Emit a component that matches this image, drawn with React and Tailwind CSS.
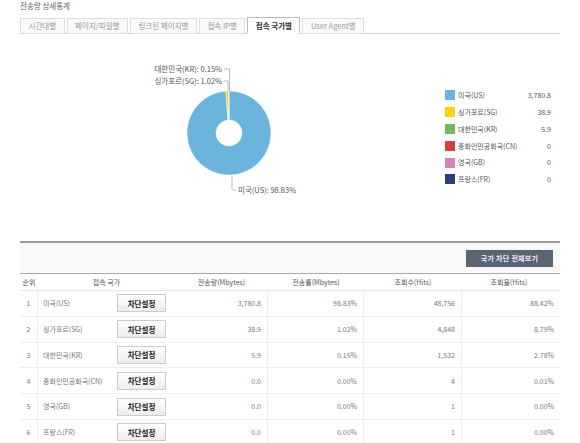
import React from 'react';

const tabs = ['시간대별', '페이지/파일별', '링크된 페이지별', '접속 IP별', '접속 국가별', 'User Agent별'];

const legend = [
  { name: '미국(US)', color: '#6bb4dd', value: '3,780.8' },
  { name: '싱가포르(SG)', color: '#fbd20e', value: '38.9' },
  { name: '대한민국(KR)', color: '#7cb75a', value: '5.9' },
  { name: '중화인민공화국(CN)', color: '#d6413f', value: '0' },
  { name: '영국(GB)', color: '#d585b9', value: '0' },
  { name: '프랑스(FR)', color: '#2b3d7b', value: '0' },
];

const rows = [
  { rank: 1, name: '미국(US)', mb: '3,780.8', rate: '98.83%', hits: '48,756', hitRate: '88.42%' },
  { rank: 2, name: '싱가포르(SG)', mb: '38.9', rate: '1.02%', hits: '4,848', hitRate: '8.79%' },
  { rank: 3, name: '대한민국(KR)', mb: '5.9', rate: '0.15%', hits: '1,532', hitRate: '2.78%' },
  { rank: 4, name: '중화인민공화국(CN)', mb: '0.0', rate: '0.00%', hits: '4', hitRate: '0.01%' },
  { rank: 5, name: '영국(GB)', mb: '0.0', rate: '0.00%', hits: '1', hitRate: '0.00%' },
  { rank: 6, name: '프랑스(FR)', mb: '0.0', rate: '0.00%', hits: '1', hitRate: '0.00%' },
];

// donut slice path, angles in degrees clockwise from 12 o'clock
const arc = (cx, cy, r, ir, a0, a1) => {
  const p = (rad, a) => {
    const t = ((a - 90) * Math.PI) / 180;
    return [cx + rad * Math.cos(t), cy + rad * Math.sin(t)];
  };
  const large = a1 - a0 > 180 ? 1 : 0;
  const [x0, y0] = p(r, a0);
  const [x1, y1] = p(r, a1);
  const [x2, y2] = p(ir, a1);
  const [x3, y3] = p(ir, a0);
  return `M${x0} ${y0} A${r} ${r} 0 ${large} 1 ${x1} ${y1} L${x2} ${y2} A${ir} ${ir} 0 ${large} 0 ${x3} ${y3} Z`;
};

const slices = [
  { pct: 98.83, color: '#6bb4dd' },
  { pct: 1.02, color: '#fbd20e' },
  { pct: 0.15, color: '#7cb75a' },
];

const DonutChart = () => {
  let start = 0;
  const cx = 209, cy = 99;
  return (
    <svg width="410" height="207" className="shrink-0">
      {slices.map((s, i) => {
        const end = start + (s.pct * 360) / 100;
        const d = arc(cx, cy, 42, 13, start, Math.min(end, 359.99));
        start = end;
        return <path key={i} d={d} fill={s.color} stroke="#fff" strokeWidth="0.5" />;
      })}
      <g fill="none" stroke="#aaa" strokeWidth="0.8">
        <path d="M204 35 H209.5 V57" />
        <path d="M204 47 H208 V57" />
        <path d="M212 142 V156 H216" />
      </g>
      <g fontFamily="'Noto Sans CJK KR', sans-serif" fontSize="7.5" fill="#555">
        <text x="202" y="37.5" textAnchor="end">대한민국(KR): 0.15%</text>
        <text x="202" y="49.5" textAnchor="end">싱가포르(SG): 1.02%</text>
        <text x="218" y="158.5">미국(US): 98.83%</text>
      </g>
    </svg>
  );
};

const App = () => {
  return (
    <div className="w-[580px] h-[443px] overflow-hidden bg-white text-[#666] font-['Noto_Sans_CJK_KR',sans-serif]">
      <div className="px-[20px]">
        <div className="h-[16px] pt-[1px] text-[7.5px] leading-[10px] text-[#666]">전송량 상세통계</div>

        {/* Tabs */}
        <div className="flex items-end gap-[2px] h-[18px] border-b border-[#ccc]">
          {tabs.map((t, i) => (
            <div
              key={t}
              className={`-mb-px flex items-center px-[7.5px] border text-[7.5px] leading-none ${
                i === 4
                  ? 'h-[17px] bg-white border-[#bbb] border-b-white font-bold text-[#333]'
                  : 'h-[16px] bg-[#fafafa] border-[#ddd] text-[#999]'
              }`}
            >
              {t}
            </div>
          ))}
        </div>

        {/* Chart + legend */}
        <div className="flex h-[207px]">
          <DonutChart />
          <div className="ml-[15px] w-[106px] pt-[53px]">
            {legend.map((l) => (
              <div key={l.name} className="flex items-center h-[16.8px] text-[7px] text-[#555]">
                <span className="w-[10px] h-[10px] shrink-0 mr-[3px]" style={{ backgroundColor: l.color }} />
                <span className="flex-1 whitespace-nowrap">{l.name}</span>
                <span className="text-right">{l.value}</span>
              </div>
            ))}
          </div>
        </div>

        {/* Table */}
        <div className="border-t-2 border-[#9a9a9a]">
          <div className="flex justify-end items-start h-[31px] pt-[7px] pr-[7px] bg-[#f8f8f8] border-b border-[#aaa]">
            <button className="h-[17px] w-[87px] bg-[#5a6473] text-[#eef] text-[7px] font-bold tracking-[0.3px]">
              국가 차단 전체보기
            </button>
          </div>
          <div className="grid grid-cols-[18px_137px_93px_96px_98px_94px] h-[17px] items-center text-[7px] text-[#555] border-b border-[#e8e8e8]">
            <div className="text-center">순위</div>
            <div className="text-center">접속 국가</div>
            <div className="text-center">전송량(Mbytes)</div>
            <div className="text-center">전송률(Mbytes)</div>
            <div className="text-center">조회수(Hits)</div>
            <div className="text-center">조회율(Hits)</div>
          </div>
          {rows.map((r) => (
            <div
              key={r.rank}
              className="grid grid-cols-[18px_137px_93px_96px_98px_94px] h-[25.8px] items-stretch text-[7px] text-[#777] border-b border-[#eee]"
            >
              <div className="flex items-center justify-center border-r border-[#eee]">{r.rank}</div>
              <div className="flex items-center pl-[5px]">
                <span className="w-[74px] whitespace-nowrap">{r.name}</span>
                <button className="h-[18px] w-[49px] border border-[#ccc] bg-gradient-to-b from-white to-[#ededed] text-[7.5px] font-bold text-[#222]">
                  차단설정
                </button>
              </div>
              <div className="flex items-center justify-end pr-[6px] border-r border-[#eee]">{r.mb}</div>
              <div className="flex items-center justify-end pr-[6px] border-r border-[#eee]">{r.rate}</div>
              <div className="flex items-center justify-end pr-[6px] border-r border-[#eee]">{r.hits}</div>
              <div className="flex items-center justify-end pr-[2px]">{r.hitRate}</div>
            </div>
          ))}
        </div>
      </div>
    </div>
  );
};

export default App;
